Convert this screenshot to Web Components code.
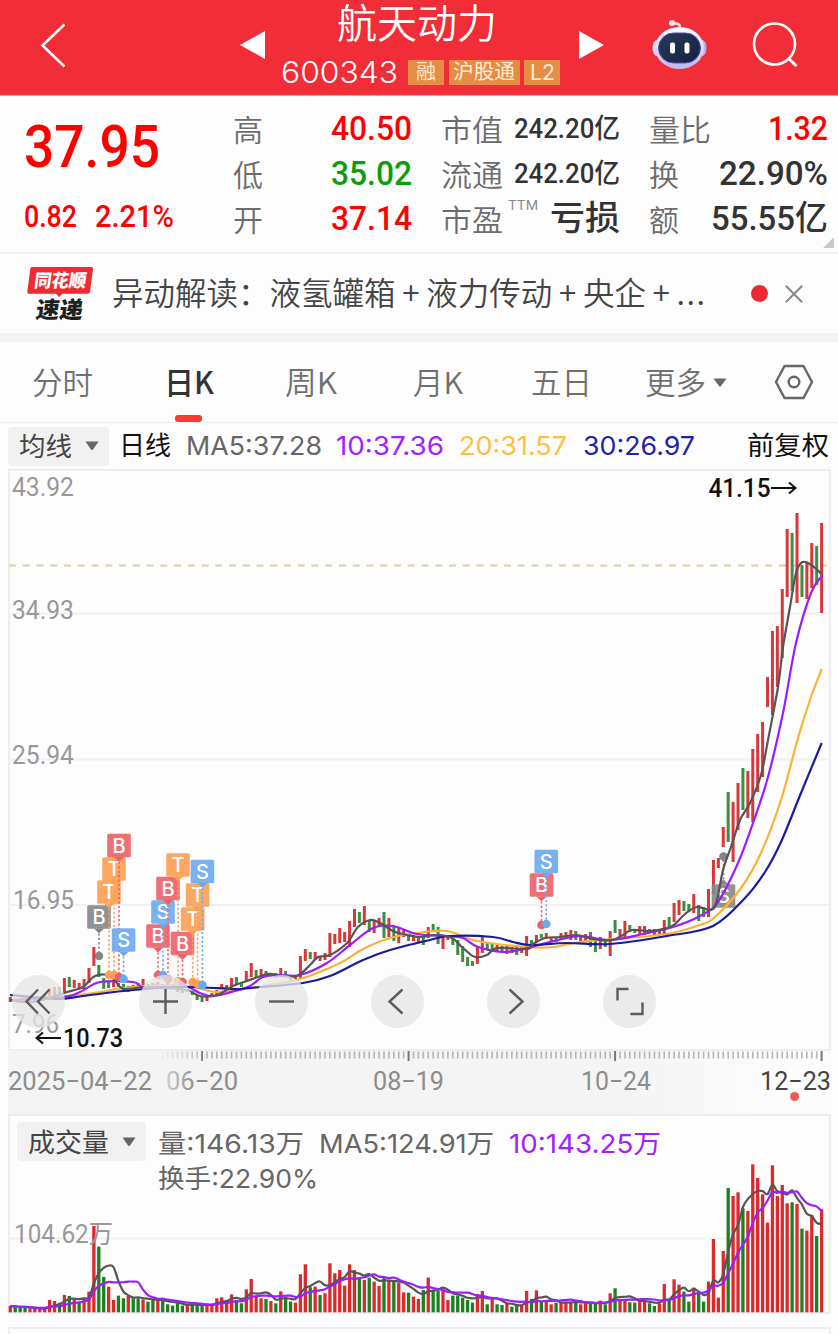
<!DOCTYPE html>
<html lang="zh-CN">
<head>
<meta charset="utf-8">
<title>航天动力 600343</title>
<style>
  body {
    margin: 0;
    width: 838px;
    height: 1334px;
    overflow: hidden;
    background: #fdfdfd;
    font-family: Inter, "Noto Sans CJK SC", sans-serif;
    color: #666;
    --din: Roboto, "Noto Sans CJK SC", sans-serif;
    --up: #ff0000;
    --down: #0c9c0c;
  }
</style>
</head>
<body>
<stock-app></stock-app>

<script>
// One line of text squeezed or stretched to the width given in "w"
class FitText extends HTMLElement {
  connectedCallback() {
    this.attachShadow({ mode: 'open' });
    this.shadowRoot.innerHTML = `
      <style>
        :host { display: block; flex: none; height: 0.72em; line-height: 0.72em; white-space: nowrap; }
        span { display: block; width: max-content; transform-origin: 0 50%; }
      </style>
      <span><slot></slot></span>
    `;
    const w = Number(this.getAttribute('w'));
    const span = this.shadowRoot.querySelector('span');
    this.style.width = w + 'px';
    const natural = span.getBoundingClientRect().width;
    if (natural) {
      span.style.transform = `scaleX(${w / natural})`;
    }
  }
}

class StockHeader extends HTMLElement {
  connectedCallback() {
    this.attachShadow({ mode: 'open' });
    this.shadowRoot.innerHTML = `
      <style>
        :host { display: flex; height: 96px; background: #f12e37; color: #fff; border-bottom: 1px solid #f9a5a8; box-sizing: border-box; }
        svg { display: block; flex: none; }
        .back { margin: 23px 0 0 40px; }
        .prev { margin: 30px 0 0 173px; }
        .next { margin: 30px 0 0 17px; }
        .bot { margin: 19px 0 0 48px; }
        .search { margin: 22px 0 0 44px; }
        .title { width: 280px; margin-left: 16px; display: flex; flex-direction: column; }
        .name { font: 350 40px "Noto Sans CJK SC", sans-serif; margin: 7px 0 0 56px; height: 29px; line-height: 29px; }
        .sub { display: flex; align-items: center; margin-top: 24px; height: 25px; }
        .code { font-size: 30px; font-weight: 350; margin-right: 10px; }
        .tag { flex: none; background: #e58c45; color: #ffead6; height: 25px; display: flex; align-items: center; justify-content: center; margin-right: 4.5px; font-size: 20px; }
      </style>
      <svg class="back" width="26" height="45"><path d="M24.500 1.500 2.500 22.500 24.500 43.500" fill="none" stroke="#fff" stroke-width="2.500"/></svg>
      <svg class="prev" width="26" height="30"><path d="M1 15 26 1V29Z" fill="#fff"/></svg>
      <div class="title">
        <fit-text class="name" w="160">航天动力</fit-text>
        <div class="sub">
          <fit-text class="code" w="117">600343</fit-text>
          <div class="tag" style="width:36px"><fit-text w="20">融</fit-text></div>
          <div class="tag" style="width:71px"><fit-text w="62">沪股通</fit-text></div>
          <div class="tag" style="width:36px"><fit-text w="25" style="font-size:21px">L2</fit-text></div>
        </div>
      </div>
      <svg class="next" width="26" height="30"><path d="M1 1V29L26 15Z" fill="#fff"/></svg>
      <svg class="bot" width="56" height="52" viewBox="652 19 56 52">
        <defs>
          <linearGradient id="shell" x1="0" y1="0" x2="0" y2="1"><stop offset="0" stop-color="#fff"/><stop offset="1" stop-color="#bcb6ee"/></linearGradient>
          <linearGradient id="visor" x1="0" y1="0" x2="1" y2="1"><stop offset="0" stop-color="#2b3a5c"/><stop offset="1" stop-color="#13203f"/></linearGradient>
        </defs>
        <path d="M680 30v-3q0-3-4-3.500h-4" fill="none" stroke="#f6dcea" stroke-width="2.500"/>
        <circle cx="672" cy="23" r="3" fill="#fbe6ef"/>
        <ellipse cx="657" cy="48" rx="4.500" ry="8" fill="#d5d3f3"/>
        <ellipse cx="702" cy="48" rx="4.500" ry="8" fill="#b4b5ea"/>
        <ellipse cx="679.500" cy="48" rx="24.500" ry="21" fill="url(#shell)"/>
        <rect x="658.500" y="33" width="42" height="30" rx="15" fill="url(#visor)" stroke="#5a4fae" stroke-width="1"/>
        <rect x="670" y="42.500" width="5" height="11" rx="2" fill="#fff"/>
        <rect x="684.500" y="42.500" width="5" height="11" rx="2" fill="#fff"/>
      </svg>
      <svg class="search" width="48" height="48"><circle cx="22.500" cy="22" r="20.500" fill="none" stroke="#fff" stroke-width="2.600"/><path d="M36.500 36.500 44.500 44" stroke="#fff" stroke-width="3"/></svg>
    `;
  }
}

class QuoteCell extends HTMLElement {
  connectedCallback() {
    this.attachShadow({ mode: 'open' });
    this.shadowRoot.innerHTML = `
      <style>
        :host { display: flex; justify-content: space-between; align-items: center; height: 45px; }
        .label { font-size: 30px; font-family: "Noto Sans CJK SC", sans-serif; font-weight: 350; color: #6c6c6c; }
        .value { font: 500 34px var(--din); height: .72em; line-height: .72em; color: #333; display: flex; align-items: center; }
      </style>
      <div class="label"><slot name="label"></slot></div>
      <slot name="mid"></slot>
      <div class="value"><slot></slot></div>
    `;
  }
}

class QuotePanel extends HTMLElement {
  connectedCallback() {
    this.attachShadow({ mode: 'open' });
    this.shadowRoot.innerHTML = `
      <style>
        :host { display: grid; grid-template-columns: 180px 179px 179px 179px; column-gap: 29px; padding: 10px 0 0 24px; height: 156px; box-sizing: border-box; position: relative; }
        .price { font: 500 60px var(--din); height: 43px; line-height: 43px; margin-top: 19px; color: var(--up); }
        .change { font: 500 31px var(--din); height: 23px; line-height: 23px; color: var(--up); display: flex; gap: 18px; margin-top: 38px; }
        .up { color: var(--up); }
        .down { color: var(--down); }
        .small { font-size: 27px; margin-top: 2px; }
        .ttm { font-size: 13px; font-weight: 400; color: #888; margin: -25px 0 0 -8px; }
        .grip { position: absolute; left: 823px; top: 141px; }
      </style>
      <div>
        <fit-text class="price" w="136">37.95</fit-text>
        <div class="change"><fit-text w="53">0.82</fit-text><fit-text w="79">2.21%</fit-text></div>
      </div>
      <div>
        <quote-cell><fit-text slot="label" w="30">高</fit-text><fit-text class="up" w="81">40.50</fit-text></quote-cell>
        <quote-cell><fit-text slot="label" w="30">低</fit-text><fit-text class="down" w="81">35.02</fit-text></quote-cell>
        <quote-cell><fit-text slot="label" w="30">开</fit-text><fit-text class="up" w="81">37.14</fit-text></quote-cell>
      </div>
      <div>
        <quote-cell><fit-text slot="label" w="62">市值</fit-text><fit-text class="small" w="106">242.20亿</fit-text></quote-cell>
        <quote-cell><fit-text slot="label" w="62">流通</fit-text><fit-text class="small" w="106">242.20亿</fit-text></quote-cell>
        <quote-cell><fit-text slot="label" w="62">市盈</fit-text><fit-text slot="mid" class="ttm" w="30">TTM</fit-text><fit-text w="70">亏损</fit-text></quote-cell>
      </div>
      <div>
        <quote-cell><fit-text slot="label" w="62">量比</fit-text><fit-text class="up" w="60">1.32</fit-text></quote-cell>
        <quote-cell><fit-text slot="label" w="30">换</fit-text><fit-text w="109">22.90%</fit-text></quote-cell>
        <quote-cell><fit-text slot="label" w="30">额</fit-text><fit-text w="117">55.55亿</fit-text></quote-cell>
      </div>
      <svg class="grip" width="11" height="11"><path d="M11 0V11H0Z" fill="#c9c9c9"/></svg>
    `;
  }
}

class NewsBar extends HTMLElement {
  connectedCallback() {
    this.attachShadow({ mode: 'open' });
    this.shadowRoot.innerHTML = `
      <style>
        :host { display: flex; align-items: center; height: 81px; box-sizing: border-box; border-top: 2px solid #f0f0f0; padding-left: 26px; }
        .logo { width: 68px; height: 56px; margin-right: 18px; }
        .text { font: 350 31.500px/40px "Noto Sans CJK SC", sans-serif; color: #444; width: 592px; margin-top: -6px; white-space: nowrap; }
        .text span { padding: 0 6.700px; }
        .text .dots { padding: 0; letter-spacing: 1.500px; }
        .dot { width: 17px; height: 17px; border-radius: 50%; background: #ea2a2e; margin: 0 17px 0 47px; }
        svg text { font-family: "Noto Sans CJK SC", sans-serif; font-weight: 900; }
      </style>
      <svg class="logo" viewBox="26 265 68 56">
        <path d="M32 266H91.500Q93.500 266 93 268L90 291Q89.700 292.800 88 292.800H62.500L59 296 56 292.800H29Q27 292.800 27.300 291L30.300 268Q30.500 266 32 266Z" fill="#ee2b31"/>
        <text transform="translate(33.500 286) skewX(-8)" font-size="18" textLength="52" lengthAdjust="spacingAndGlyphs" fill="#fff">同花顺</text>
        <text transform="translate(35 317) skewX(-8)" font-size="23" textLength="47" lengthAdjust="spacingAndGlyphs" fill="#1f1f1f">速递</text>
      </svg>
      <div class="text">异动解读：液氢罐箱<span>+</span>液力传动<span>+</span>央企<span>+</span><span class="dots">...</span></div>
      <div class="dot"></div>
      <svg width="18" height="18"><path d="M.800.800 17.200 17.200M17.200.800.800 17.200" stroke="#888" stroke-width="2"/></svg>
    `;
  }
}

class PeriodTabs extends HTMLElement {
  connectedCallback() {
    this.attachShadow({ mode: 'open' });
    this.shadowRoot.innerHTML = `
      <style>
        :host { display: flex; align-items: center; height: 90px; box-sizing: border-box; border-top: 9px solid #f3f3f3; border-bottom: 1px solid #eee; padding-left: 32px; font-family: "Noto Sans CJK SC", sans-serif; font-size: 30.500px; font-weight: 350; color: #707070; }
        .on { font-weight: 500; color: #333; margin: 0 71px 0 71px; position: relative; }
        .on::after { content: ""; position: absolute; left: 11px; top: 44px; width: 27px; height: 7px; border-radius: 3px; background: #fb3a33; }
      </style>
      <fit-text w="61">分时</fit-text>
      <div class="on"><fit-text w="50">日K</fit-text></div>
      <fit-text w="52">周K</fit-text>
      <fit-text w="50" style="margin-left:76px">月K</fit-text>
      <fit-text w="61" style="margin-left:68px">五日</fit-text>
      <fit-text w="61" style="margin-left:53px">更多</fit-text>
      <svg width="14" height="9" style="margin-left:7px"><path d="M.500.500H13.500L8 8Q7 9 6 8Z" fill="#666"/></svg>
      <svg width="40" height="36" style="margin-left:46.500px"><path d="M10.500 2H29.500L38 18 29.500 34H10.500L2 18Z" fill="none" stroke="#666" stroke-width="2.400" stroke-linejoin="round"/><circle cx="20" cy="18" r="5.300" fill="none" stroke="#666" stroke-width="2.400"/></svg>
    `;
  }
}

// Grey drop-down button at the start of an indicator legend
class PickButton extends HTMLElement {
  connectedCallback() {
    this.attachShadow({ mode: 'open' });
    this.shadowRoot.innerHTML = `
      <style>
        :host { display: flex; flex: none; align-items: center; justify-content: space-between; height: 39px; padding: 0 10px 0 11px; box-sizing: border-box; background: #f1f1f1; border-radius: 4px; color: #444; }
        .label { margin-top: 3px; }
      </style>
      <div class="label"><slot></slot></div>
      <svg width="14" height="10"><path d="M.500.500H13.500L8 8.500Q7 9.500 6 8.500Z" fill="#666"/></svg>
    `;
  }
}

class MaLegend extends HTMLElement {
  connectedCallback() {
    this.attachShadow({ mode: 'open' });
    this.shadowRoot.innerHTML = `
      <style>
        :host { display: flex; align-items: center; height: 46px; padding-left: 8px; font-size: 26px; font-weight: 400; }
        .ink { color: #111; }
      </style>
      <pick-button style="width:101px"><fit-text w="53">均线</fit-text></pick-button>
      <fit-text class="ink" w="52" style="margin-left:10px">日线</fit-text>
      <fit-text w="136" style="margin-left:15px">MA5:37.28</fit-text>
      <fit-text w="108" style="margin-left:14px;color:#a020ff">10:37.36</fit-text>
      <fit-text w="108" style="margin-left:15px;color:#ffbf3a">20:31.57</fit-text>
      <fit-text w="112" style="margin-left:16px;color:#2222a8">30:26.97</fit-text>
      <fit-text class="ink" w="82" style="margin-left:52px">前复权</fit-text>
    `;
  }
}

const STEP = 4.917;
const barX = i => 10.3 + STEP * i;

// Direction and size of each daily bar
const VOLUMES = `R19 G17 G14 G14 R12 R10 R10 R10 R37 R34 G29 R52 G49 R39 G29 R42 R62 R259 G197 G106 R77 R37 G50 G42 R49 G42 G42 R39 G32 G37 R37 G37 G24 G20 G27 G20 R22 G22 G24 G22 R22 R24 R42 R45 R37 R54 G37 G27 R69 R100 R47 R42 G40 R34 G27 R63 G47 G32 R29 R114 R144 G75 R77 G52 R57 R147 R117 R127 R80 R144 R127 G102 R97 G104 R92 R79 G105 R97 G95 R89 R60 G59 R47 R40
G67 R104 G67 G65 R67 R37 G50 G50 G44 G37 G29 R55 R64 G24 R40 G24 G22 R25 G17 G22 R20 R64 G40 R66 G32 R32 R24 G29 R30 R32 R32 G32 R24 R29 G27 G25 R35 G24 R57 G72 R40 R40 G30 G29 R37 R34 G27 G19 R25 R85 G40 R99 R83 G62 G32 R74 G60 G32 R92 R220 R44 R184 G373 R349 R360 G312 R304 R444 R403 R354 R269 R441 R349 R382 R327 G330 R325 G251 R245 R292 G229 R309`
  .split(/\s+/).map(s => ({ up: s[0] === 'R', v: Number(s.slice(1)) }));

// High and low of each bar, as chart heights
const CANDLES = `R997-1002 G999-1001 R999-1002 R999-1001 R998-1001 G999-1001 R997-1001 R995-1000 R988-997 R987-996 G987-994 R978-992 G977-987 R980-988 R983-989 R979-989 R968-983 R947-966 G965-977 G978-989 G982-988 R982-987 R983-987 G984-990 G986-992 R985-991 R983-987 R979-985 G984-987 R983-987 R982-986 G984-988 R983-987 R984-988 G988-992 G989-993 R989-992 G991-995 G995-1000 G997-1002 R995-1001 R993-997 R990-994 R984-989 R985-988 R978-987 G977-985 G983-987 R971-982 R963-977 G970-977 R969-977 G971-977 G973-976 R973-978 R968-977 G971-976 R976-980 R975-980 R956-978 R949-961 G952-959 R952-960 R957-961 R953-960 R933-957 R934-944 R928-943 R932-942 R921-947 R909-927 G912-923 R906-925 G921-932 R921-933 R918-927 G912-938 R918-937 G927-941 R927-943 R930-937 G935-941 R935-941 R936-942 G937-945 R927-938 G924-932 G927-944 R936-949 R935-940 G938-945 G940-955 G946-962 G957-966 G961-966 R946-964 R937-953 G943-949 G943-951 R945-951
G946-952 R946-954 R947-953 G947-955 R947-953 R936-956 G940-946 R935-943 G934-938 R933-939 R937-942 G937-942 R933-939 R932-938 R930-940 G931-940 R935-941 R934-942 G932-947 G940-952 R937-949 G939-947 R931-956 G920-933 R929-937 R921-937 G925-932 G929-933 R926-935 R926-935 R929-933 R929-936 R929-935 R920-935 G917-927 R903-922 R900-915 G901-911 G904-912 R894-913 G905-921 G907-917 R889-917 R860-894 R858-868 R827-847 G792-842 R802-862 R783-830 G768-810 R771-818 R749-822 R734-792 R722-777 R677-707 R631-715 R626-687 R589-658 R529-597 G533-591 R513-603 G565-597 R563-599 R543-588 G546-585 R523-613`
  .split(/\s+/).map(s => {
    const [high, low] = s.slice(1).split('-').map(Number);
    return { up: s[0] === 'R', high, low };
  });

const MA_LINES = [
  { color: '#f9b233', pts: '10,1000 77,995 100,992 133,987 187,986 217,992 257,987 300,979 340,963 363,949 390,938 417,933 447,931 477,941 527,947 553,947 580,942 613,939 667,934 700,925 715,917 741,888 761,853 781,800 798,738 811,697 821.700,669' },
  { color: '#9b1cff', pts: '10,1000 63,997 80,992 100,982 133,982 143,987 167,987 187,987 200,993 213,996 235,991 250,986 263,977 280,975 300,975 327,963 350,945 373,928 393,926 417,934 447,936 463,938 478,947 505,952 527,948 550,942 580,936 610,940 643,934 673,927 700,916 718,902 738,863 753,823 768,777 783,713 796,643 811,593 821.700,576' },
  { color: '#1a1aa0', pts: '10,995 57,999 83,996 133,990 187,987 233,989 250,988 303,983 330,976 363,960 390,950 430,940 450,936 493,937 513,942 530,945 567,943 610,944 667,936 713,926 745,898 765,872 781,842 801,793 821.700,743' },
  { color: '#555', pts: '10,1000 30,1002 50,998 67,992 83,987 95,976 110,976 120,987 127,989 147,987 167,988 187,990 200,996 217,995 233,986 247,981 268,974 280,976 297,976 310,965 318,957 330,955 347,943 358,927 370,920 380,923 393,931 407,935 420,937 437,935 452,938 463,948 475,957 487,955 497,948 527,949 533,944 545,938 560,937 577,935 588,938 600,940 613,940 623,935 632,930 650,931 667,928 675,924 685,914 697,907 710,910 716.300,903 723,870 731,847 740,820 750,803 761,775 768,740 778,687 783,647 790,607 796,573 802,562.300 810,564 821.700,574' }
];

const MARKS = [
  ['B', 99, 917, 956, 'g'], ['T', 109, 892, 975, 'o'], ['T', 114, 869, 975, 'o'], ['B', 119, 845.5, 977, 'r'], ['S', 123.6, 940, 979, 'b'],
  ['B', 158, 936, 975, 'r'], ['S', 163, 912, 975, 'b'], ['B', 168, 888.5, 979, 'r'], ['T', 178, 865, 981, 'o'], ['B', 182.5, 943.5, 982, 'r'],
  ['T', 192.7, 919, 982, 'o'], ['T', 197.600, 895, 984, 'o'], ['S', 202.4, 871.500, 985, 'b'],
  ['B', 541.5, 885, 925, 'r'], ['S', 546.3, 861.5, 924, 'b'], ['S', 723.5, 896, 856.500, 'g']
];
const MARK_COLORS = { g: '#868686', o: '#fc9f52', r: '#ee5f66', b: '#6ca9f0' };

// Catmull-Rom spline through a list of points
function smooth(pts) {
  let d = `M${pts[0].join()}`;
  for (let i = 0; i < pts.length - 1; i++) {
    const p0 = pts[i - 1] || pts[i], p1 = pts[i], p2 = pts[i + 1], p3 = pts[i + 2] || p2;
    d += `C${p1[0] + (p2[0] - p0[0]) / 6},${p1[1] + (p2[1] - p0[1]) / 6} ${p2[0] - (p3[0] - p1[0]) / 6},${p2[1] - (p3[1] - p1[1]) / 6} ${p2[0]},${p2[1]}`;
  }
  return d;
}

class RoundButton extends HTMLElement {
  connectedCallback() {
    this.attachShadow({ mode: 'open' });
    this.shadowRoot.innerHTML = `
      <style>
        :host { display: block; width: 53px; height: 53px; border-radius: 50%; background: rgba(229, 229, 229, .78); }
        path { fill: none; stroke: #5c5c5c; stroke-width: 2.400; }
      </style>
      <svg width="53" height="53" viewBox="-26.500 -26.500 53 53"><path d="${this.getAttribute('icon')}"/></svg>
    `;
  }
}

class PriceChart extends HTMLElement {
  connectedCallback() {
    this.attachShadow({ mode: 'open' });
    const candles = CANDLES.map((c, i) =>
      `<rect x="${barX(i) - 1.5}" y="${c.high}" width="3" height="${c.low - c.high}" fill="${c.up ? '#d8383b' : '#3b8f3e'}"/>`).join('');
    const lines = MA_LINES.map(l =>
      `<path d="${smooth(l.pts.split(' ').map(p => p.split(',').map(Number)))}" fill="none" stroke="${l.color}" stroke-width="2.200"/>`).join('');
    const mark = ([letter, x, y, end, key]) => {
      const c = MARK_COLORS[key];
      const dir = end > y ? 1 : -1;
      return `<path d="M${x} ${y + 12 * dir}V${end}" stroke="${c}" stroke-width="1.600" stroke-dasharray="2.200 2.200"/>
        <circle cx="${x}" cy="${end}" r="4.300" fill="${c}"/>
        <path d="M${x - 5} ${y + 11.500 * dir}h10l-5 ${5 * dir}z" fill="${c}"/>
        <rect x="${x - 11.8}" y="${y - 11.8}" width="23.600" height="23.600" rx="1.500" fill="${c}" fill-opacity=".9"/>
        <text class="m" x="${x}" y="${y + 7.2}">${letter}</text>`;
    };
    this.shadowRoot.innerHTML = `
      <style>
        :host { display: block; position: relative; margin-left: 8px; width: 823px; height: 582px; }
        svg.plot { display: block; }
        text { font-family: Roboto, sans-serif; font-size: 26px; fill: #999; }
        .m { font-family: Inter, sans-serif; font-size: 20px; font-weight: 500; fill: #fff; text-anchor: middle; }
        .peak { font-weight: 500; fill: #111; font-size: 25.500px; }
        .tools { position: absolute; left: 3.500px; top: 506px; display: flex; gap: 63.200px; }
        .tools :first-child { margin-right: 11px; }
      </style>
      <svg class="plot" width="823" height="582" viewBox="8 469 823 582">
        <rect x="9" y="470" width="821" height="580" fill="#fdfdfd" stroke="#eee" stroke-width="2"/>
        <path d="M9 613.500H830M9 759.500H830M9 905H830" stroke="#f1f1f1" stroke-width="2"/>
        <path d="M9 565.500H830" stroke="#e2cda6" stroke-width="2" stroke-dasharray="7 6.750"/>
        <text x="12" y="495.500" textLength="62" lengthAdjust="spacingAndGlyphs">43.92</text>
        <text x="12" y="618.500" textLength="62" lengthAdjust="spacingAndGlyphs">34.93</text>
        <text x="12" y="764" textLength="62" lengthAdjust="spacingAndGlyphs">25.94</text>
        <text x="13" y="909" textLength="61" lengthAdjust="spacingAndGlyphs">16.95</text>
        <text x="12" y="1032.500" textLength="47" lengthAdjust="spacingAndGlyphs">7.96</text>
        ${candles}
        ${mark(MARKS[MARKS.length - 1])}
        ${lines}
        ${MARKS.slice(0, -1).map(mark).join('')}
        <text class="peak" x="708.500" y="496.500" textLength="62" lengthAdjust="spacingAndGlyphs">41.15</text>
        <path d="M771 488H795.500M789 482.500 795.500 488 789 493.500" fill="none" stroke="#111" stroke-width="2"/>
        <text class="peak" x="63" y="1047" textLength="60" lengthAdjust="spacingAndGlyphs">10.73</text>
        <path d="M61 1038H37M43 1032.500 36.500 1038 43 1043.500" fill="none" stroke="#111" stroke-width="2"/>
      </svg>
      <div class="tools">
        <round-button icon="M-.500-12-12 0-.500 12M11-12-.500 0 11 12"></round-button>
        <round-button icon="M-12.500 0H12.500M0-12.500V12.500"></round-button>
        <round-button icon="M-12.500 0H12.500"></round-button>
        <round-button icon="M5-12-8 0 5 12"></round-button>
        <round-button icon="M-4-12 9 0-4 12"></round-button>
        <round-button icon="M-12-1V-12.500H-1M13 1V12.500H1"></round-button>
      </div>
    `;
  }
}

class TimeAxis extends HTMLElement {
  connectedCallback() {
    this.attachShadow({ mode: 'open' });
    let ticks = '';
    for (let i = 31; i <= 165; i++) {
      const major = (i - 39) % 42 === 0;
      const fade = Math.min(1, (i - 30) / 10);
      ticks += `<rect x="${barX(i) - (major ? 1 : 0.8)}" y="${major ? 1051 : 1051.5}" width="${major ? 2 : 1.6}" height="${major ? 10 : 7}" fill="${major ? '#777' : '#b5b5b5'}" opacity="${fade}"/>`;
    }
    this.shadowRoot.innerHTML = `
      <style>
        :host { display: block; margin-left: 8px; width: 823px; height: 63px; }
        svg { display: block; }
        text { font-family: Roboto, sans-serif; font-size: 25.500px; fill: #8c8c8c; }
      </style>
      <svg width="823" height="63" viewBox="8 1051 823 63">
        <defs>
          <linearGradient id="bg" x1="0" x2="1"><stop offset="0" stop-color="#f3f3f3"/><stop offset=".75" stop-color="#f4f4f4"/><stop offset=".95" stop-color="#fcfcfc"/></linearGradient>
          <linearGradient id="fog" gradientUnits="userSpaceOnUse" x1="165" x2="195" y1="0" y2="0"><stop offset="0" stop-color="#d0d0d0"/><stop offset="1" stop-color="#8c8c8c"/></linearGradient>
        </defs>
        <rect x="8" y="1051" width="823" height="63" fill="url(#bg)"/>
        ${ticks}
        <text x="8" y="1089.500" textLength="144" lengthAdjust="spacingAndGlyphs">2025−04−22</text>
        <text x="166" y="1089.500" textLength="72" lengthAdjust="spacingAndGlyphs" style="fill:url(#fog)">06−20</text>
        <text x="373" y="1089.500" textLength="71" lengthAdjust="spacingAndGlyphs">08−19</text>
        <text x="581" y="1089.500" textLength="70" lengthAdjust="spacingAndGlyphs">10−24</text>
        <text x="760" y="1089.500" textLength="71" lengthAdjust="spacingAndGlyphs" style="fill:#444">12−23</text>
        <circle cx="794.600" cy="1096.500" r="4.500" fill="#f25a5a"/>
      </svg>
    `;
  }
}

class VolumeChart extends HTMLElement {
  average(i, n) {
    const part = VOLUMES.slice(Math.max(0, i - n + 1), i + 1);
    return part.reduce((sum, b) => sum + b.v, 0) / part.length;
  }

  line(n, color) {
    const pts = VOLUMES.map((b, i) => [barX(i), 1312.3 - this.average(i, n) / 3]);
    return `<path d="${smooth(pts)}" fill="none" stroke="${color}" stroke-width="2.200"/>`;
  }

  connectedCallback() {
    this.attachShadow({ mode: 'open' });
    const bars = VOLUMES.map((b, i) =>
      `<rect x="${barX(i) - 1.65}" y="${1312.3 - b.v / 3}" width="3.300" height="${b.v / 3}" fill="${b.up ? '#da2a2c' : '#1c7f20'}"/>`).join('');
    this.shadowRoot.innerHTML = `
      <style>
        :host { display: grid; margin-left: 8px; width: 823px; height: 200px; }
        .plot, .legend { grid-area: 1 / 1; }
        .plot { display: block; }
        .legend { display: flex; align-items: flex-start; padding: 8px 0 0 9px; font-size: 26px; font-weight: 400; }
        .stats { display: flex; flex-wrap: wrap; column-gap: 15px; row-gap: 17px; padding: 12.500px 0 0 12px; width: 520px; }
        .axis { font-family: Roboto, "Noto Sans CJK SC", sans-serif; font-size: 26px; fill: #999; }
      </style>
      <svg class="plot" width="823" height="200" viewBox="8 1114 823 200">
        <rect x="9" y="1115" width="821" height="198" fill="#fdfdfd" stroke="#eee" stroke-width="2"/>
        <path d="M9 1238.500H830" stroke="#f1f1f1" stroke-width="2"/>
        ${bars}
        <text class="axis" x="14" y="1242.500" textLength="99" lengthAdjust="spacingAndGlyphs">104.62万</text>
        ${this.line(5, '#555')}
        ${this.line(10, '#9b1cff')}
      </svg>
      <div class="legend">
        <pick-button style="width:129px"><fit-text w="81">成交量</fit-text></pick-button>
        <div class="stats">
          <fit-text w="146">量:146.13万</fit-text>
          <fit-text w="175">MA5:124.91万</fit-text>
          <fit-text w="152" style="color:#a020ff">10:143.25万</fit-text>
          <fit-text w="160">换手:22.90%</fit-text>
        </div>
      </div>
    `;
  }
}

class StockApp extends HTMLElement {
  connectedCallback() {
    this.attachShadow({ mode: 'open' });
    this.shadowRoot.innerHTML = `
      <style>
        :host { display: flex; flex-direction: column; }
        .more { margin: 13px 0 0 8px; width: 823px; height: 20px; box-sizing: border-box; border: 2px solid #eee; }
      </style>
      <stock-header></stock-header>
      <quote-panel></quote-panel>
      <news-bar></news-bar>
      <period-tabs></period-tabs>
      <ma-legend></ma-legend>
      <price-chart></price-chart>
      <time-axis></time-axis>
      <volume-chart></volume-chart>
      <div class="more"></div>
    `;
  }
}

customElements.define('stock-app', StockApp);
customElements.define('stock-header', StockHeader);
customElements.define('quote-panel', QuotePanel);
customElements.define('quote-cell', QuoteCell);
customElements.define('news-bar', NewsBar);
customElements.define('period-tabs', PeriodTabs);
customElements.define('ma-legend', MaLegend);
customElements.define('pick-button', PickButton);
customElements.define('price-chart', PriceChart);
customElements.define('round-button', RoundButton);
customElements.define('time-axis', TimeAxis);
customElements.define('volume-chart', VolumeChart);
// Last, so that the text is measured inside finished layouts
customElements.define('fit-text', FitText);
</script>
</body>
</html>
